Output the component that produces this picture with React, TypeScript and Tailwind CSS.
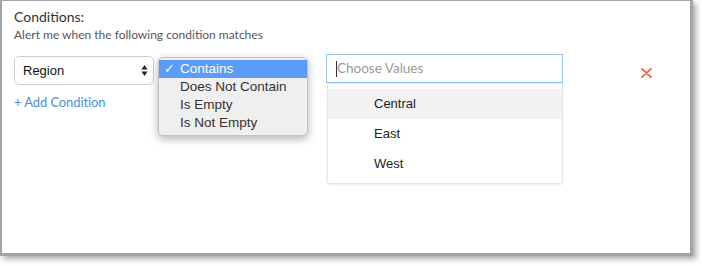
export default function App() {
  const lato = { fontFamily: 'Lato, "Open Sans", sans-serif' } as const;
  const helv = { fontFamily: '"Liberation Sans", Arial, sans-serif' } as const;
  return (
    <div className="w-[702px] h-[266px] bg-white overflow-hidden">
      <div className="w-[693px] h-[256px] bg-white border-l-2 border-r-[3px] border-b-[3px] border-t border-[#a2a5a8] shadow-[3px_3px_6px_rgba(0,0,0,0.35)]">
        <div className="pl-[12px] pt-[7px]" style={lato}>
          <div className="text-[14px] leading-[18px] text-[#333]">Conditions:</div>
          <div className="text-[12px] leading-[16px] mt-[1px] text-[#555]">Alert me when the following condition matches</div>
          <div className="relative mt-[11px] flex items-start h-[140px]">
            <div className="w-[140px] mt-[2px] flex flex-col">
              <div className="h-[29px] rounded-[5px] border border-[#cfcfcf] bg-white flex items-center justify-between pl-[8px] pr-[5px]">
                <span className="text-[13px] text-[#111]" style={helv}>Region</span>
                <svg width="7" height="13" viewBox="0 0 7 13">
                  <path d="M3.5 1 L6.5 5.5 L0.5 5.5 Z" fill="#222" />
                  <path d="M3.5 12 L6.5 7.5 L0.5 7.5 Z" fill="#222" />
                </svg>
              </div>
              <div className="mt-[9px] text-[13px] leading-[16px] tracking-[-0.1px] text-[#4a8fe0]">+ Add Condition</div>
            </div>

            <div className="absolute left-[144px] top-[3px] w-[150px] h-[79px] rounded-[5px] border border-[#c2c2c2] bg-[#efefef] shadow-[0_3px_8px_rgba(0,0,0,0.3)] pt-[2px]" style={helv}>
              {[
                { t: "Contains", sel: true },
                { t: "Does Not Contain", sel: false },
                { t: "Is Empty", sel: false },
                { t: "Is Not Empty", sel: false },
              ].map((it) => (
                <div
                  key={it.t}
                  className={`h-[18px] flex items-center text-[13.5px] ${it.sel ? "bg-[#5b9cf6] text-white" : "text-[#333]"}`}
                >
                  <span className="w-[21px] pl-[5px] text-[13px]">{it.sel ? "✓" : ""}</span>
                  <span>{it.t}</span>
                </div>
              ))}
            </div>

            <div className="ml-[172px] relative w-[237px]">
              <div className="h-[29px] border border-[#93c3f2] bg-white flex items-center pl-[9px]">
                <span className="w-px h-[16px] bg-[#333]" />
                <span className="text-[13.5px] text-[#9a9a9a]">Choose Values</span>
              </div>
              <div className="absolute left-[1px] top-[29px] w-[236px] h-[101px] bg-white border border-[#e6e6e6] rounded-b-[3px] shadow-[0_1px_3px_rgba(0,0,0,0.08)] pt-[5px]" style={helv}>
                {["Central", "East", "West"].map((v, i) => (
                  <div
                    key={v}
                    className={`h-[30px] flex items-center pl-[46px] text-[13px] text-[#222] ${i === 0 ? "bg-[#f2f2f2]" : ""}`}
                  >
                    {v}
                  </div>
                ))}
              </div>
            </div>

            <div className="ml-[78px] mt-[14px]">
              <svg width="11" height="10" viewBox="0 0 11 10">
                <path d="M1 0.8 L10 9.2 M10 0.8 L1 9.2" stroke="#e8603c" strokeWidth="1.7" strokeLinecap="round" />
              </svg>
            </div>
          </div>
        </div>
      </div>
    </div>
  );
}
